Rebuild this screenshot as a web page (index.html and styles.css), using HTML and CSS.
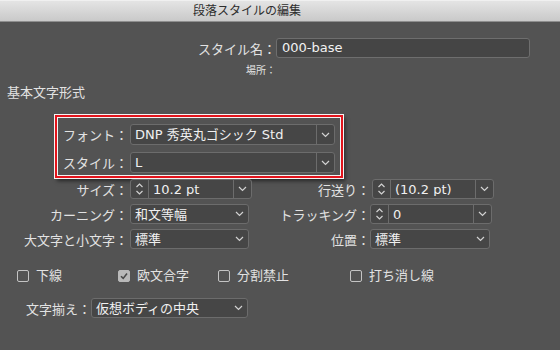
FILE: index.html
```html
<!DOCTYPE html>
<html lang="ja">
<head>
    <meta charset="UTF-8">
    <title>段落スタイルの編集</title>
    <link rel="stylesheet" href="styles.css">
</head>
<body>
    <div class="titlebar">段落スタイルの編集</div>

    <div class="panel">
        <div class="name-row">
            <span class="name-label">スタイル名：</span>
            <div class="text-input">000-base</div>
        </div>
        <div class="place-row">場所：</div>
        <div class="section-title">基本文字形式</div>

        <div class="highlight">
            <div class="row">
                <span class="label">フォント：</span>
                <div class="select split font-select">
                    <span class="value">DNP 秀英丸ゴシック Std</span>
                    <span class="arrow"><svg width="9" height="6" viewBox="0 0 9 6"><polyline points="1,1 4.5,4.5 8,1"/></svg></span>
                </div>
            </div>
            <div class="row">
                <span class="label">スタイル：</span>
                <div class="select split font-select">
                    <span class="value">L</span>
                    <span class="arrow"><svg width="9" height="6" viewBox="0 0 9 6"><polyline points="1,1 4.5,4.5 8,1"/></svg></span>
                </div>
            </div>
        </div>

        <div class="grid">
            <span class="label">サイズ：</span>
            <div class="select split">
                <span class="spin"><svg width="9" height="16" viewBox="0 0 9 16"><polyline points="1.5,6 4.5,3 7.5,6"/><polyline points="1.5,10 4.5,13 7.5,10"/></svg></span>
                <span class="value">10.2 pt</span>
                <span class="arrow"><svg width="9" height="6" viewBox="0 0 9 6"><polyline points="1,1 4.5,4.5 8,1"/></svg></span>
            </div>
            <span class="label">行送り：</span>
            <div class="select split">
                <span class="spin"><svg width="9" height="16" viewBox="0 0 9 16"><polyline points="1.5,6 4.5,3 7.5,6"/><polyline points="1.5,10 4.5,13 7.5,10"/></svg></span>
                <span class="value">(10.2 pt)</span>
                <span class="arrow"><svg width="9" height="6" viewBox="0 0 9 6"><polyline points="1,1 4.5,4.5 8,1"/></svg></span>
            </div>

            <span class="label">カーニング：</span>
            <div class="select short">
                <span class="value">和文等幅</span>
                <span class="arrow"><svg width="9" height="6" viewBox="0 0 9 6"><polyline points="1,1 4.5,4.5 8,1"/></svg></span>
            </div>
            <span class="label">トラッキング：</span>
            <div class="select split tracking">
                <span class="spin"><svg width="9" height="16" viewBox="0 0 9 16"><polyline points="1.5,6 4.5,3 7.5,6"/><polyline points="1.5,10 4.5,13 7.5,10"/></svg></span>
                <span class="value">0</span>
                <span class="arrow"><svg width="9" height="6" viewBox="0 0 9 6"><polyline points="1,1 4.5,4.5 8,1"/></svg></span>
            </div>

            <span class="label">大文字と小文字：</span>
            <div class="select short">
                <span class="value">標準</span>
                <span class="arrow"><svg width="9" height="6" viewBox="0 0 9 6"><polyline points="1,1 4.5,4.5 8,1"/></svg></span>
            </div>
            <span class="label">位置：</span>
            <div class="select short position">
                <span class="value">標準</span>
                <span class="arrow"><svg width="9" height="6" viewBox="0 0 9 6"><polyline points="1,1 4.5,4.5 8,1"/></svg></span>
            </div>
        </div>

        <div class="checks">
            <label class="check c1"><span class="box"></span>下線</label>
            <label class="check c2"><span class="box checked"><svg width="10" height="10" viewBox="0 0 10 10"><polyline points="2,5.2 4.2,7.4 8,2.6"/></svg></span>欧文合字</label>
            <label class="check c3"><span class="box"></span>分割禁止</label>
            <label class="check"><span class="box"></span>打ち消し線</label>
        </div>

        <div class="align-row">
            <span class="align-label">文字揃え：</span>
            <div class="select align-select">
                <span class="value">仮想ボディの中央</span>
                <span class="arrow"><svg width="9" height="6" viewBox="0 0 9 6"><polyline points="1,1 4.5,4.5 8,1"/></svg></span>
            </div>
        </div>
    </div>
</body>
</html>
```

FILE: styles.css
```css
body {
    margin: 0;
    height: 350px;
    overflow: hidden;
    background-color: #535353;
    color: #e2e2e2;
    font-family: "DejaVu Sans", "Noto Sans CJK JP", sans-serif;
    font-size: 13px;
}
.titlebar {
    height: 22px;
    box-sizing: border-box;
    padding-left: 193px;
    line-height: 21px;
    font-size: 12px;
    color: #2e2e2e;
    background: linear-gradient(#e4e4e4, #c9c9c9);
    border-top: 1px solid #f0f0f0;
    border-bottom: 1px solid #8e8e8e;
}
.name-row {
    display: flex;
    align-items: center;
    margin-top: 16px;
}
.name-label {
    width: 276px;
    text-align: right;
}
.text-input {
    width: 254px;
    height: 20px;
    box-sizing: border-box;
    padding-left: 5px;
    line-height: 18px;
    color: #f2f2f2;
    background-color: #454545;
    border: 1px solid #6e6e6e;
    border-radius: 3px;
}
.place-row {
    width: 276px;
    margin-top: 6px;
    text-align: right;
    font-size: 10px;
    line-height: 14px;
}
.section-title {
    margin-top: 6px;
    padding-left: 7px;
    line-height: 18px;
}
.highlight {
    width: 288px;
    margin: 13px 0 0 55px;
    padding: 7px 0 3px;
    box-sizing: border-box;
    border: 2px solid #e3141c;
    box-shadow: 0 0 0 1px #f4f4f4, inset 0 0 0 1px #f4f4f4, 2px 3px 4px rgba(0, 0, 0, 0.55);
}
.row {
    display: flex;
    align-items: center;
    gap: 2px;
    margin-bottom: 7px;
}
.row:last-child {
    margin-bottom: 0;
}
.row .label {
    width: 71px;
}
.label {
    text-align: right;
    white-space: nowrap;
}
.select {
    display: flex;
    align-items: center;
    height: 20px;
    box-sizing: border-box;
    color: #f0f0f0;
    background-color: #464646;
    border: 1px solid #6c6c6c;
    border-radius: 3px;
    line-height: 1;
}
.font-select {
    width: 205px;
    height: 21px;
}
.value {
    flex: 1;
    padding-left: 4px;
    white-space: nowrap;
    overflow: hidden;
}
.arrow, .spin {
    display: flex;
    align-items: center;
    justify-content: center;
    align-self: stretch;
    width: 17px;
}
.split .arrow {
    border-left: 1px solid #6c6c6c;
}
.spin {
    border-right: 1px solid #6c6c6c;
}
.arrow svg polyline, .spin svg polyline {
    fill: none;
    stroke: #d2d2d2;
    stroke-width: 1.2;
}
.grid {
    display: grid;
    grid-template-columns: 128px 122px 116px 122px;
    grid-auto-rows: 20px;
    column-gap: 2px;
    row-gap: 5px;
    align-items: center;
    margin-top: 1px;
}
.grid .select {
    width: 100%;
}
.grid .short {
    width: 119px;
}
.grid .tracking {
    margin-left: -2px;
}
.grid .position {
    margin-left: -2px;
    width: 120px;
}
.checks {
    display: flex;
    margin-top: 18px;
    padding-left: 17px;
    line-height: 18px;
}
.check {
    display: flex;
    align-items: center;
    gap: 7px;
}
.c1 { width: 101px; }
.c2 { width: 100px; }
.c3 { width: 132px; }
.box {
    display: flex;
    align-items: center;
    justify-content: center;
    width: 12px;
    height: 12px;
    box-sizing: border-box;
    border: 1px solid #c4c4c4;
    border-radius: 2px;
}
.box.checked {
    background-color: #b9b9b9;
    border-color: #b9b9b9;
}
.box svg polyline {
    fill: none;
    stroke: #4a4a4a;
    stroke-width: 1.6;
}
.align-row {
    display: flex;
    align-items: center;
    margin-top: 13px;
    padding-left: 26px;
}
.align-label {
    width: 65px;
}
.align-select {
    width: 157px;
}
```
